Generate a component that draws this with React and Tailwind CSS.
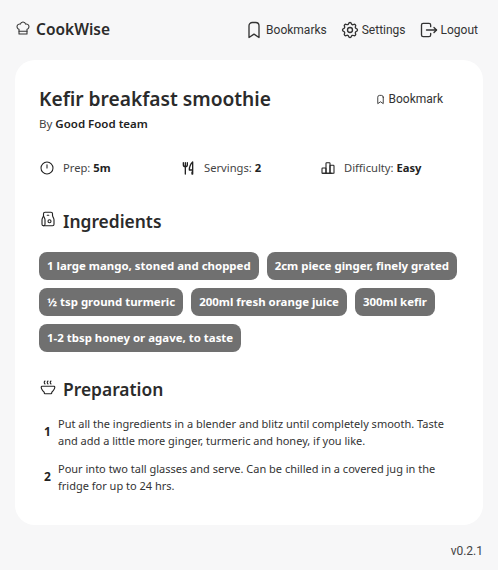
import React from "react";
import {
  TbChefHat,
  TbBookmark,
  TbSettings,
  TbLogout,
  TbClockHour12,
  TbToolsKitchen2,
  TbChartBar,
  TbPaperBag,
  TbSoup,
} from "react-icons/tb";

const ingredients = [
  "1 large mango, stoned and chopped",
  "2cm piece ginger, finely grated",
  "½ tsp ground turmeric",
  "200ml fresh orange juice",
  "300ml kefir",
  "1-2 tbsp honey or agave, to taste",
];

const steps = [
  "Put all the ingredients in a blender and blitz until completely smooth. Taste and add a little more ginger, turmeric and honey, if you like.",
  "Pour into two tall glasses and serve. Can be chilled in a covered jug in the fridge for up to 24 hrs.",
];

const NavLink = ({ icon: Icon, label, size, gap }) => (
  <a className={`flex items-center ${gap} text-[#333]`}>
    <Icon size={size} strokeWidth={1.6} />
    <span>{label}</span>
  </a>
);

const Meta = ({ icon, label, value, className }) => (
  <div className={`flex items-center gap-[8px] ${className}`}>
    {icon}
    <span className="text-[11.2px] text-[#444]">
      {label}: <b className="font-bold text-[#222]">{value}</b>
    </span>
  </div>
);

export default function App() {
  return (
    <div className="min-h-[570px] bg-[#f7f7f8] font-['Noto_Sans','Open_Sans',sans-serif] text-[#222]">
      <header className="flex h-[60px] items-center justify-between pl-[15px] pr-[20px]">
        <div className="flex items-center gap-[5px]">
          <TbChefHat size={16} strokeWidth={1.6} className="mb-[4px] text-[#333]" />
          <span className="text-[15.5px] font-semibold text-[#2b2b2b]">CookWise</span>
        </div>
        <nav className="flex items-center gap-[13px] font-['Roboto',sans-serif] text-xs">
          <NavLink icon={TbBookmark} label="Bookmarks" size={20} gap="gap-[2px]" />
          <NavLink icon={TbSettings} label="Settings" size={20} gap="gap-[2px]" />
          <NavLink icon={TbLogout} label="Logout" size={20} gap="gap-[2px]" />
        </nav>
      </header>

      <main className="mx-[15px] h-[465px] rounded-[20px] bg-white pl-[24px] pr-[25px] pt-[25px]">
        <div className="flex items-start justify-between">
          <div>
            <h1 className="text-[19.2px] font-semibold leading-[28px] text-[#2b2b2b]">Kefir breakfast smoothie</h1>
            <p className="mt-[1px] text-[11.5px] leading-[20px] text-[#444]">
              By <b className="font-semibold text-[#222]">Good Food team</b>
            </p>
          </div>
          <button className="mr-[15px] mt-[6px] flex items-center gap-[3px] font-['Roboto',sans-serif] text-xs text-[#333]">
            <TbBookmark size={11} strokeWidth={2} />
            Bookmark
          </button>
        </div>

        <div className="mt-[24px] flex h-[20px] items-center">
          <Meta className="w-[141px]" icon={<TbClockHour12 size={16} strokeWidth={1.6} />} label="Prep" value="5m" />
          <Meta className="w-[140px]" icon={<TbToolsKitchen2 size={16} strokeWidth={2} />} label="Servings" value="2" />
          <Meta icon={<TbChartBar size={16} strokeWidth={1.6} />} label="Difficulty" value="Easy" />
        </div>

        <section className="mt-[30px]">
          <div className="flex items-center gap-[6px]">
            <TbPaperBag size={18} strokeWidth={1.5} className="mb-[4px]" />
            <h2 className="text-[17.4px] font-semibold leading-[26px] text-[#2b2b2b]">Ingredients</h2>
          </div>
          <div className="mt-[18px] flex flex-wrap gap-[8px]">
            {ingredients.map((item) => (
              <span key={item} className="flex h-[28px] items-center rounded-[8px] bg-[#707070] px-[8px] text-[11.45px] font-bold text-white">
                {item}
              </span>
            ))}
          </div>
        </section>

        <section className="mt-[24px]">
          <div className="flex items-center gap-[6px]">
            <TbSoup size={18} strokeWidth={1.5} className="mb-[4px]" />
            <h2 className="text-[17.4px] font-semibold leading-[26px] text-[#2b2b2b]">Preparation</h2>
          </div>
          <ol className="mt-[13px] flex flex-col gap-[11px]">
            {steps.map((step, i) => (
              <li key={i} className="flex items-center">
                <span className="w-[19px] shrink-0 pl-[5px] text-xs font-bold text-[#222]">{i + 1}</span>
                <p className="text-[11px] leading-[17px] text-[#333]">{step}</p>
              </li>
            ))}
          </ol>
        </section>
      </main>

      <footer className="mt-[18px] pr-[15px] text-right font-['Roboto',sans-serif] text-xs text-[#444]">v0.2.1</footer>
    </div>
  );
}
